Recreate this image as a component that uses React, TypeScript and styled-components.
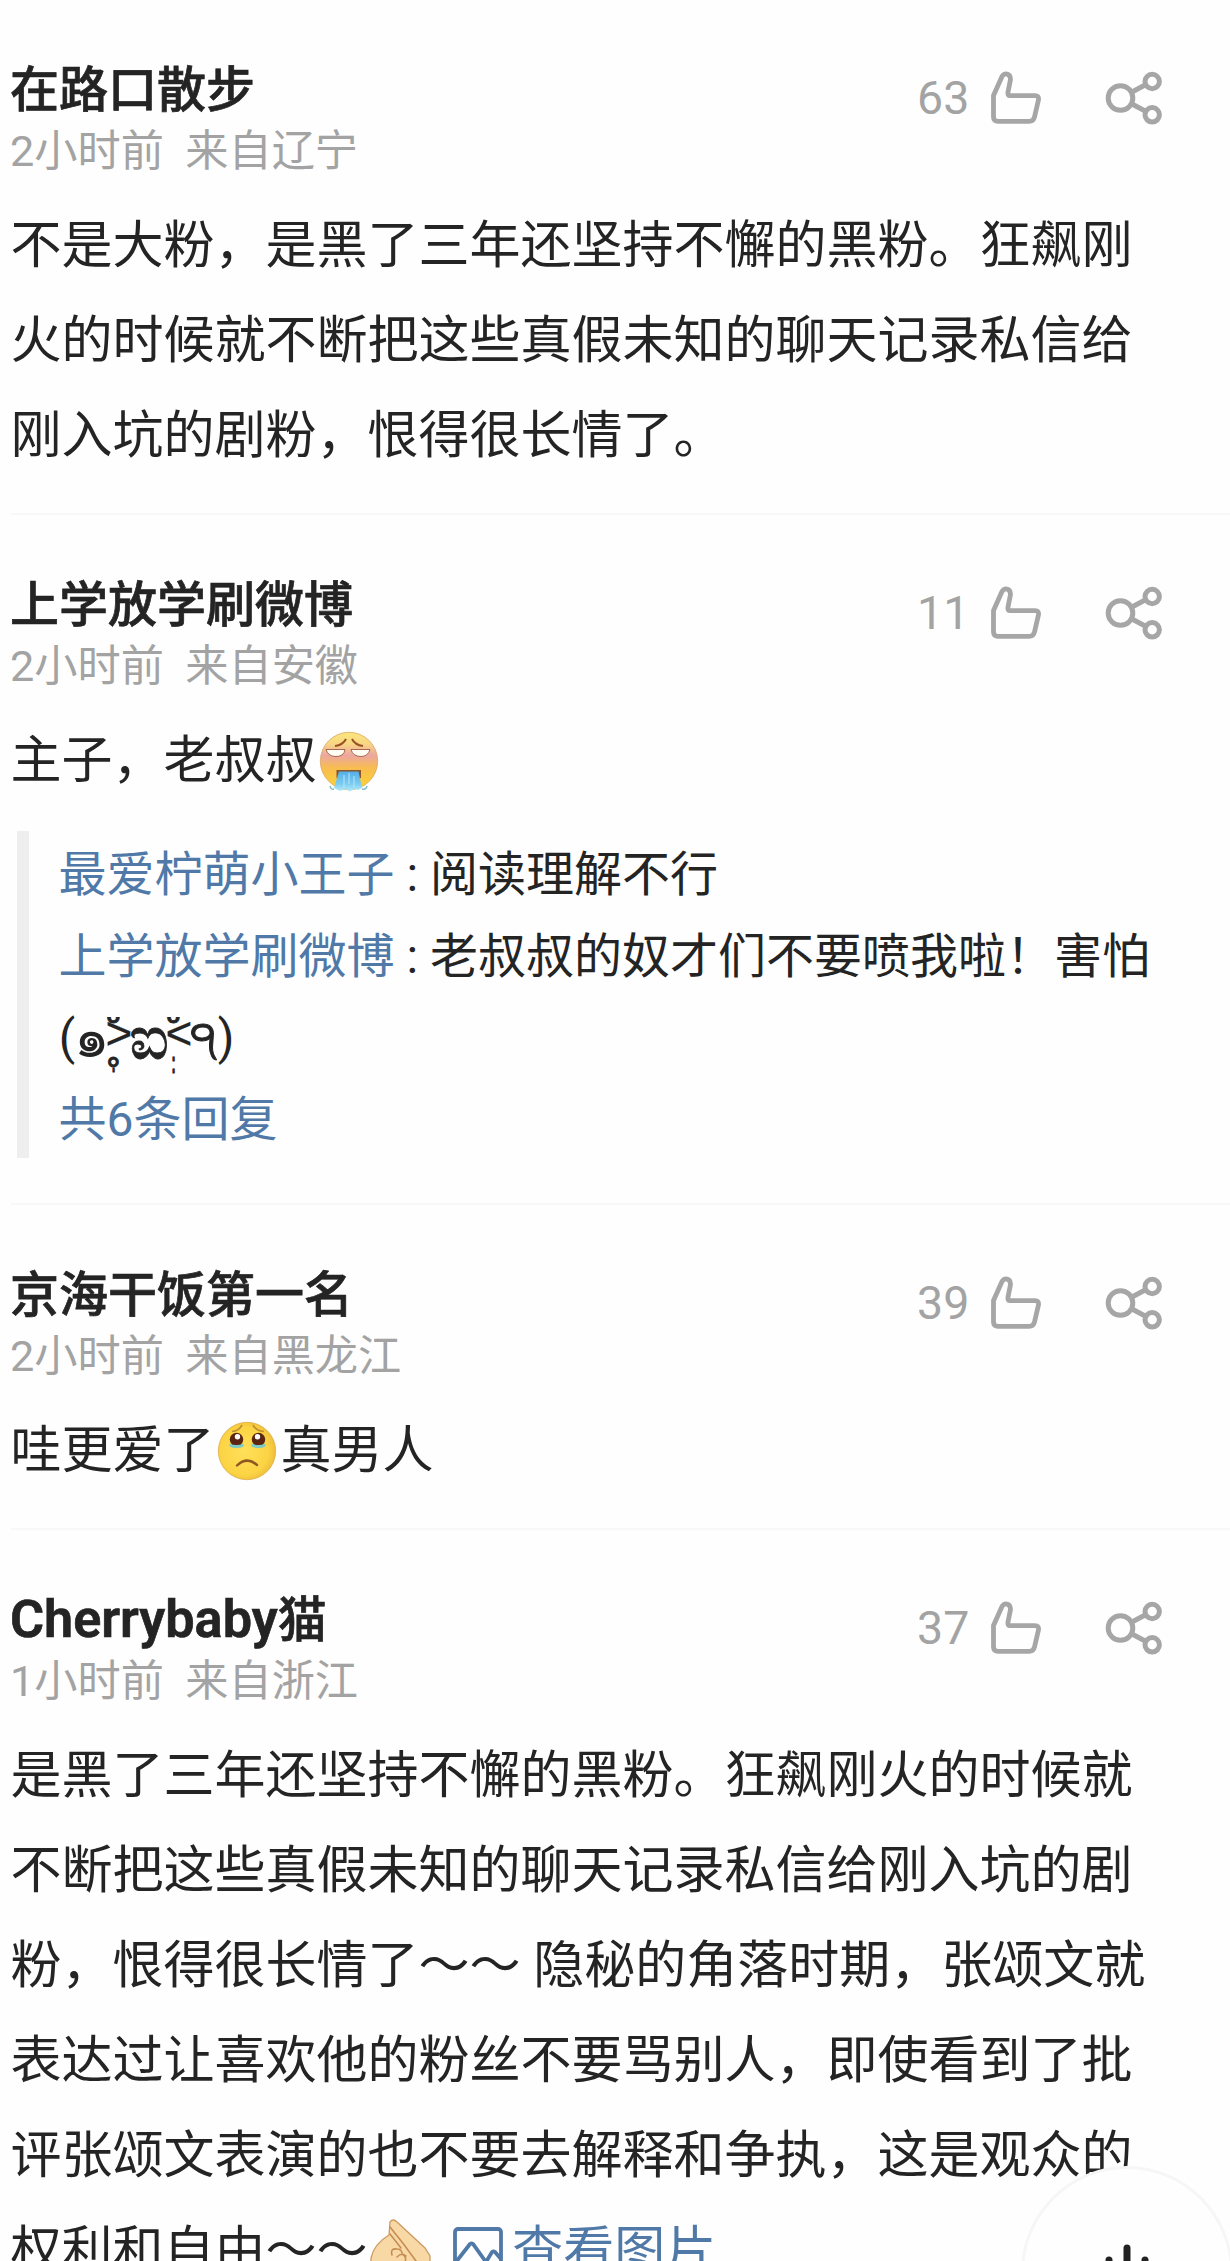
import React from "react";
import styled, { createGlobalStyle } from "styled-components";

const Global = createGlobalStyle`
  html, body { margin: 0; padding: 0; background: #fefefe; }
  * { box-sizing: border-box; }
`;

const Page = styled.main`
  position: relative;
  height: 2261px;
  overflow: hidden;
  background: #fefefe;
  color: #242424;
  font-family: Roboto, "Noto Sans CJK SC", sans-serif;
`;

const Post = styled.article<{ $end?: number }>`
  margin-left: 11px;
  padding: 60px 0 ${(p) => p.$end ?? 30}px;
  border-bottom: 2px solid #f8f8f8;
`;

const Header = styled.header`
  display: flex;
  height: 138px;
`;

const Author = styled.div`
  flex: 1;
  margin-left: -1px;
`;

const Name = styled.h2`
  margin: 0;
  height: 61px;
  line-height: 62px;
  font-size: 49px;
  font-weight: 500;
  -webkit-text-stroke: 0.7px #242424;
  white-space: nowrap;
`;

const Latin = styled.span`
  font-size: 52.2px;
  font-weight: 600;
  line-height: 1;
`;

const Meta = styled.div`
  height: 60px;
  line-height: 61px;
  font-size: 43.2px;
  color: #a3a3a3;
  white-space: pre;
`;

const Actions = styled.div`
  display: flex;
  align-items: center;
  width: 313px;
  height: 75px;
  color: #a3a3a3;
`;

const Count = styled.span`
  width: 73px;
  font-size: 46.5px;
  line-height: 76px;
`;

const ShareSlot = styled.span`
  display: flex;
  margin-left: 63px;
`;

const Body = styled.p`
  margin: 0 0 0 -0.5px;
  font-size: 51px;
  line-height: 95px;
  white-space: nowrap;
`;

const Line = styled.span`
  display: block;
  height: 95px;
`;

const Inline = styled.svg`
  display: inline-block;
  width: 66px;
  height: 66px;
  vertical-align: -15.5px;
`;

const Link = styled.span`
  color: #5079a8;
`;

const Replies = styled.section`
  margin: 23px 0 0 6px;
  height: 327px;
  border-left: 12px solid #eee;
  padding: 3px 0 0 29.5px;
  font-size: 48px;
  line-height: 81.75px;
  white-space: pre;
`;

const Reply = styled.div`
  display: block;
  height: 81.75px;
`;

const Kaomoji = styled.span`
  display: flex;
  height: 81.75px;
`;

const Cell = styled.span<{ $w: number; $size?: number; $lift?: number; $ink?: number }>`
  position: relative;
  display: flex;
  justify-content: center;
  width: ${(p) => p.$w}px;
  font-size: ${(p) => p.$size ?? 48}px;
  line-height: ${(p) => 80 - (p.$lift ?? 0) * 2}px;
  -webkit-text-stroke: ${(p) => p.$ink ?? 0}px #242424;
`;

const Mark = styled.span<{ $top: number; $size: number }>`
  position: absolute;
  left: -7px;
  top: ${(p) => p.$top}px;
  width: 24px;
  text-align: center;
  font-size: ${(p) => p.$size}px;
  line-height: 1;
  -webkit-text-stroke: 0.8px #242424;
`;

const Fab = styled.button`
  position: absolute;
  left: 1021px;
  top: 2166px;
  width: 212px;
  height: 212px;
  padding: 0;
  border: 3px solid #f6f6f6;
  border-radius: 50%;
  background: #fefefe;
`;

const Like = () => (
  <svg width="52" height="54" viewBox="0 0 52 54" fill="none" stroke="#a6a6a6" strokeWidth="4.8" strokeLinejoin="round">
    <path d="M3.500 24.500 L12 5.500 Q13.500 2.900 16 2.900 Q20.500 3.400 20.500 8.500 L18 21 Q17.500 24.700 20 24.700 H45 Q49 24.700 48.500 28.700 L44.500 46 Q43.500 50.400 39 50.400 H8 Q3.500 50.400 3.500 46 Z" />
  </svg>
);

const Share = () => (
  <svg width="58" height="54" viewBox="0 0 58 54" fill="none" stroke="#a6a6a6" strokeWidth="5">
    <circle cx="15.500" cy="27" r="12.300" />
    <circle cx="47.200" cy="10.500" r="7.200" />
    <circle cx="47.200" cy="43.800" r="7.200" />
    <path d="M27 21 L41 13.500 M27 33 L41 40.500" />
  </svg>
);

const WaterfallFace = () => (
  <Inline viewBox="0 0 66 66">
    <defs>
      <linearGradient id="wf" x1="0" y1="0" x2="0" y2="1">
        <stop offset="0" stopColor="#fbe77c" />
        <stop offset=".2" stopColor="#f8d684" />
        <stop offset=".4" stopColor="#eca6a2" />
        <stop offset=".62" stopColor="#f8bd50" />
        <stop offset="1" stopColor="#fbd435" />
      </linearGradient>
      <linearGradient id="water" x1="0" y1="0" x2="0" y2="1">
        <stop offset="0" stopColor="#54aee8" />
        <stop offset=".6" stopColor="#79cbf0" />
        <stop offset="1" stopColor="#b5ecf8" />
      </linearGradient>
    </defs>
    <circle cx="32" cy="33" r="28.700" fill="url(#wf)" stroke="#d8a860" strokeWidth=".8" />
    <path d="M18 18 Q26 17 29 11 M35 11 Q38 17 46 18" fill="none" stroke="#9a5225" strokeWidth="2" />
    <path d="M9 21.500 H28 Q27 29 18 28.500 Q11 28 9 21.500Z M34 21.500 H53 Q51 28.500 44 28.500 Q36 28.500 34 21.500Z" fill="#fffdf4" stroke="#a6694b" strokeWidth="1" />
    <path d="M19.500 42 H44 V50 H19.500Z" fill="#87552f" />
    <path d="M22 43.500 H41.500 L45 60 L41 62 L37 61 L33 63.500 L28 61 L23 63 L17 60 Z" fill="url(#water)" />
    <path d="M27 47 V60 M32 45 V56 M37 48 V59" stroke="#b9e8fb" strokeWidth="1" />
    <path d="M17 61 q-3 1 -4 -3 M45 61 q4 1 5 -3" fill="none" stroke="#83bccd" strokeWidth="1.500" />
  </Inline>
);

const TearyFace = () => (
  <Inline viewBox="0 0 66 66">
    <defs>
      <radialGradient id="tf" cx=".45" cy=".5" r=".55">
        <stop offset="0" stopColor="#ffe05a" />
        <stop offset=".75" stopColor="#fcd444" />
        <stop offset="1" stopColor="#efbe3c" />
      </radialGradient>
    </defs>
    <circle cx="32" cy="33" r="28.700" fill="url(#tf)" stroke="#dcb04a" strokeWidth=".8" />
    <path d="M17 13.500 Q24 13 27 7 M38 7 Q41 13 49 13.500" fill="none" stroke="#c2912f" strokeWidth="1.700" />
    <circle cx="21.500" cy="21.500" r="6.700" fill="#5a2611" />
    <circle cx="43.500" cy="21.500" r="6.700" fill="#5a2611" />
    <circle cx="22.500" cy="18.700" r="2.700" fill="#fff" />
    <circle cx="42.500" cy="18.700" r="2.700" fill="#fff" />
    <path d="M14.500 25.500 q7 3 14 0 v3 q-7 3 -14 0Z M36.500 25.500 q7 3 14 0 v3 q-7 3 -14 0Z" fill="#7cc9c6" />
    <path d="M22 47.500 Q32 38 42 47" fill="none" stroke="#8f5722" strokeWidth="2.400" strokeLinecap="round" />
  </Inline>
);

const HandSign = () => (
  <Inline viewBox="0 0 66 66">
    <path d="M3 40 Q6 26 21 17 L22 4 Q25 0 29 4 L57 30 L62 38 V66 H3Z" fill="#f8d9a6" stroke="#cc9b62" strokeWidth="1.300" />
    <path d="M22 9 Q36 26 48 43 M22 16 L33 30 M24 37 Q22 30 29 31 Q34 31 34 36 Q40 39 36 46 M29 39 Q34 34 38 38" fill="none" stroke="#c68d54" strokeWidth="1.600" strokeLinecap="round" />
  </Inline>
);

const PhotoIcon = () => (
  <Inline viewBox="0 0 66 66" fill="none" stroke="#5079a8" strokeWidth="3.800">
    <rect x="9" y="11" width="46" height="42" rx="3" />
    <path d="M10 44 L24 26 Q25.500 25 27 26 L40 44 L46 34 Q47.500 33 49 34 L55 41" />
  </Inline>
);

function PostHeader({ name, meta, count }: { name: React.ReactNode; meta: string; count: number }) {
  return (
    <Header>
      <Author>
        <Name>{name}</Name>
        <Meta>{meta}</Meta>
      </Author>
      <Actions>
        <Count>{count}</Count>
        <Like />
        <ShareSlot><Share /></ShareSlot>
      </Actions>
    </Header>
  );
}

const Lines = ({ lines }: { lines: string[] }) => (
  <>{lines.map((l) => <Line key={l}>{l}</Line>)}</>
);

export default function App() {
  return (
    <Page>
      <Global />
      <Post>
        <PostHeader name="在路口散步" meta="2小时前  来自辽宁" count={63} />
        <Body>
          <Lines lines={["不是大粉，是黑了三年还坚持不懈的黑粉。狂飙刚", "火的时候就不断把这些真假未知的聊天记录私信给", "刚入坑的剧粉，恨得很长情了。"]} />
        </Body>
      </Post>
      <Post $end={45}>
        <PostHeader name="上学放学刷微博" meta="2小时前  来自安徽" count={11} />
        <Body><Line>主子，老叔叔<WaterfallFace /></Line></Body>
        <Replies>
          <Reply><Link>最爱柠萌小王子</Link> : 阅读理解不行</Reply>
          <Reply><Link>上学放学刷微博</Link> : 老叔叔的奴才们不要喷我啦！害怕</Reply>
          <Kaomoji>
            <Cell $w={17}>(</Cell>
            <Cell $w={33} $size={56}>๑</Cell>
            <Cell $w={21} $size={46} $lift={5} $ink={0.3}>
              ˃<Mark $top={17} $size={40}>˘</Mark><Mark $top={57} $size={48}>˚</Mark><Mark $top={67} $size={26}>ˈ</Mark>
            </Cell>
            <Cell $w={39} $size={62} $ink={0.8}>ಐ</Cell>
            <Cell $w={21} $size={46} $lift={5} $ink={0.3}>
              ˂<Mark $top={17} $size={40}>˘</Mark><Mark $top={56} $size={26}>ˈ</Mark><Mark $top={68} $size={26}>ˈ</Mark>
            </Cell>
            <Cell $w={28} $size={50} $ink={1}>੧</Cell>
            <Cell $w={17}>)</Cell>
          </Kaomoji>
          <Reply><Link>共6条回复</Link></Reply>
        </Replies>
      </Post>
      <Post>
        <PostHeader name="京海干饭第一名" meta="2小时前  来自黑龙江" count={39} />
        <Body><Line>哇更爱了<TearyFace />真男人</Line></Body>
      </Post>
      <Post>
        <PostHeader name={<><Latin>Cherrybaby</Latin>猫</>} meta="1小时前  来自浙江" count={37} />
        <Body>
          <Lines lines={["是黑了三年还坚持不懈的黑粉。狂飙刚火的时候就", "不断把这些真假未知的聊天记录私信给刚入坑的剧", "粉，恨得很长情了～～ 隐秘的角落时期，张颂文就", "表达过让喜欢他的粉丝不要骂别人，即使看到了批", "评张颂文表演的也不要去解释和争执，这是观众的"]} />
          <Line>权利和自由～～<HandSign /> <Link><PhotoIcon />查看图片</Link></Line>
        </Body>
      </Post>
      <Fab aria-label="更多">
        <svg width="206" height="206" viewBox="0 0 206 206" stroke="#222" strokeWidth="7" strokeLinecap="round">
          <path d="M103 79 V125 M85 91 V119 M121 91 V119" />
        </svg>
      </Fab>
    </Page>
  );
}
